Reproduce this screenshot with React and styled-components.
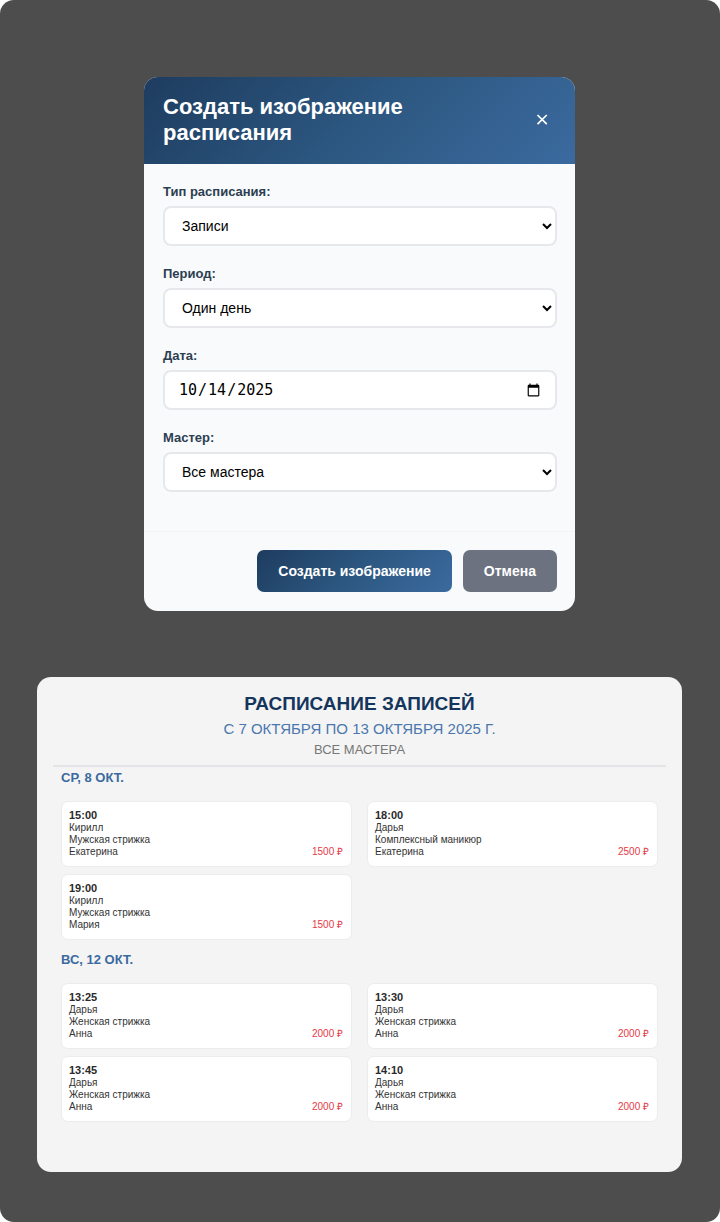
import React from "react";
import styled, { createGlobalStyle, css } from "styled-components";

const GlobalStyle = createGlobalStyle`
  *, *::before, *::after { box-sizing: border-box; }
  body {
    margin: 0;
    background: #fff;
    font-family: "Liberation Sans", Arial, sans-serif;
  }
`;

const Page = styled.main`
  display: flex;
  flex-direction: column;
  align-items: center;
  gap: 66px;
  min-height: 100vh;
  padding: 77px 38px 50px 37px;
  border-radius: 14px;
  background: #4d4d4d;
`;

const Dialog = styled.form`
  display: flex;
  flex-direction: column;
  width: 100%;
  max-width: 431px;
  border-radius: 14px;
  overflow: hidden;
  background: #f9fafc;
`;

const DialogHeader = styled.header`
  display: flex;
  align-items: center;
  justify-content: space-between;
  gap: 16px;
  padding: 17px 19px 18px;
  background: linear-gradient(135deg, #1e3c5f 0%, #2c5780 50%, #3b6a9f 100%);
`;

const DialogTitle = styled.h1`
  margin: 0;
  max-width: 300px;
  color: #fff;
  font-size: 22px;
  line-height: 26px;
  font-weight: 700;
`;

const CloseButton = styled.button`
  display: grid;
  place-items: center;
  width: 28px;
  height: 28px;
  padding: 0;
  border: 0;
  background: none;
  color: #fff;
  cursor: pointer;
`;

const Fields = styled.div`
  display: flex;
  flex-direction: column;
  gap: 20px;
  padding: 20px 18px 39px 19px;
`;

const Field = styled.div`
  display: flex;
  flex-direction: column;
  gap: 6px;
`;

const Label = styled.label`
  color: #2c3e50;
  font-size: 13px;
  line-height: 16px;
  font-weight: 700;
`;

const control = css`
  width: 100%;
  height: 40px;
  border: 2px solid #e6e8ec;
  border-radius: 8px;
  background: #fff;
  color: #000;
  font-size: 14px;
`;

const Select = styled.select`
  ${control}
  padding: 0 0 0 13px;
  font-family: inherit;
`;

const DateInput = styled.input`
  ${control}
  padding: 0 12px 0 13px;
  font-family: "DejaVu Sans Mono", monospace;
  font-size: 15px;
`;

const DialogFooter = styled.footer`
  display: flex;
  justify-content: flex-end;
  gap: 11px;
  padding: 18px 18px 19px;
  border-top: 1px solid #f2f4f6;
`;

const Button = styled.button`
  height: 42px;
  padding: 0 21px;
  border: 0;
  border-radius: 7px;
  background: ${({ $primary }) =>
    $primary
      ? "linear-gradient(135deg, #1e3c5f 0%, #2c5780 50%, #3b6a9f 100%)"
      : "#6c7280"};
  color: #fff;
  font-family: inherit;
  font-size: 14px;
  font-weight: 700;
  cursor: pointer;
`;

const Report = styled.section`
  width: 100%;
  min-height: 495px;
  padding: 13px 16px 50px;
  border-radius: 14px;
  background: #f4f4f4;
`;

const ReportHeader = styled.header`
  display: flex;
  flex-direction: column;
  align-items: center;
  padding-bottom: 6px;
  border-bottom: 2px solid #e2e4e8;
  text-align: center;
  text-transform: uppercase;
`;

const ReportTitle = styled.h2`
  margin: 0;
  color: #14365d;
  font-size: 19px;
  line-height: 27px;
  font-weight: 700;
`;

const Period = styled.p`
  margin: 0;
  color: #4a78ae;
  font-size: 15px;
  line-height: 24px;
`;

const Staff = styled.p`
  margin: 0;
  color: #777;
  font-size: 13px;
  line-height: 18px;
`;

const Days = styled.div`
  display: flex;
  flex-direction: column;
  gap: 12px;
  padding: 3px 8px 0;
`;

const DayTitle = styled.h3`
  margin: 0 0 15px;
  color: #3b6a9f;
  font-size: 13px;
  line-height: 16px;
  font-weight: 700;
  text-transform: uppercase;
`;

const Cards = styled.div`
  display: grid;
  grid-template-columns: 1fr 1fr;
  gap: 7px 15px;
`;

const Card = styled.article`
  display: flex;
  align-items: flex-end;
  justify-content: space-between;
  padding: 6px 8px 8px 7px;
  border: 1px solid #ececec;
  border-radius: 7px;
  background: #fff;
  color: #333;
  font-size: 10px;
  line-height: 12px;
`;

const Line = styled.p`
  margin: 0;
`;

const Time = styled.h4`
  margin: 0;
  color: #2a2a2a;
  font-size: 11px;
  line-height: 14px;
  font-weight: 700;
`;

const Price = styled.span`
  color: #e63946;
`;

const days = [
  {
    title: "Ср, 8 окт.",
    visits: [
      ["15:00", "Кирилл", "Мужская стрижка", "Екатерина", 1500],
      ["18:00", "Дарья", "Комплексный маникюр", "Екатерина", 2500],
      ["19:00", "Кирилл", "Мужская стрижка", "Мария", 1500],
    ],
  },
  {
    title: "Вс, 12 окт.",
    visits: [
      ["13:25", "Дарья", "Женская стрижка", "Анна", 2000],
      ["13:30", "Дарья", "Женская стрижка", "Анна", 2000],
      ["13:45", "Дарья", "Женская стрижка", "Анна", 2000],
      ["14:10", "Дарья", "Женская стрижка", "Анна", 2000],
    ],
  },
];

function SelectField({ id, label, value }) {
  return (
    <Field>
      <Label htmlFor={id}>{label}</Label>
      <Select id={id} defaultValue={value}>
        <option>{value}</option>
      </Select>
    </Field>
  );
}

export default function App() {
  return (
    <>
      <GlobalStyle />
      <Page>
        <Dialog onSubmit={(event) => event.preventDefault()}>
          <DialogHeader>
            <DialogTitle>Создать изображение расписания</DialogTitle>
            <CloseButton type="button" aria-label="Закрыть">
              <svg width="12" height="12" viewBox="0 0 12 12" aria-hidden="true">
                <path
                  d="M1.5 1 10.8 10.2M10.8 1 1.5 10.2"
                  fill="none"
                  stroke="currentColor"
                  strokeWidth="1.7"
                />
              </svg>
            </CloseButton>
          </DialogHeader>
          <Fields>
            <SelectField id="kind" label="Тип расписания:" value="Записи" />
            <SelectField id="period" label="Период:" value="Один день" />
            <Field>
              <Label htmlFor="date">Дата:</Label>
              <DateInput id="date" type="date" defaultValue="2025-10-14" />
            </Field>
            <SelectField id="staff" label="Мастер:" value="Все мастера" />
          </Fields>
          <DialogFooter>
            <Button type="submit" $primary>
              Создать изображение
            </Button>
            <Button type="button">Отмена</Button>
          </DialogFooter>
        </Dialog>

        <Report>
          <ReportHeader>
            <ReportTitle>Расписание записей</ReportTitle>
            <Period>с 7 октября по 13 октября 2025 г.</Period>
            <Staff>Все мастера</Staff>
          </ReportHeader>
          <Days>
            {days.map(({ title, visits }) => (
              <section key={title}>
                <DayTitle>{title}</DayTitle>
                <Cards>
                  {visits.map(([time, client, service, master, price]) => (
                    <Card key={time}>
                      <div>
                        <Time>{time}</Time>
                        <Line>{client}</Line>
                        <Line>{service}</Line>
                        <Line>{master}</Line>
                      </div>
                      <Price>{price} ₽</Price>
                    </Card>
                  ))}
                </Cards>
              </section>
            ))}
          </Days>
        </Report>
      </Page>
    </>
  );
}
